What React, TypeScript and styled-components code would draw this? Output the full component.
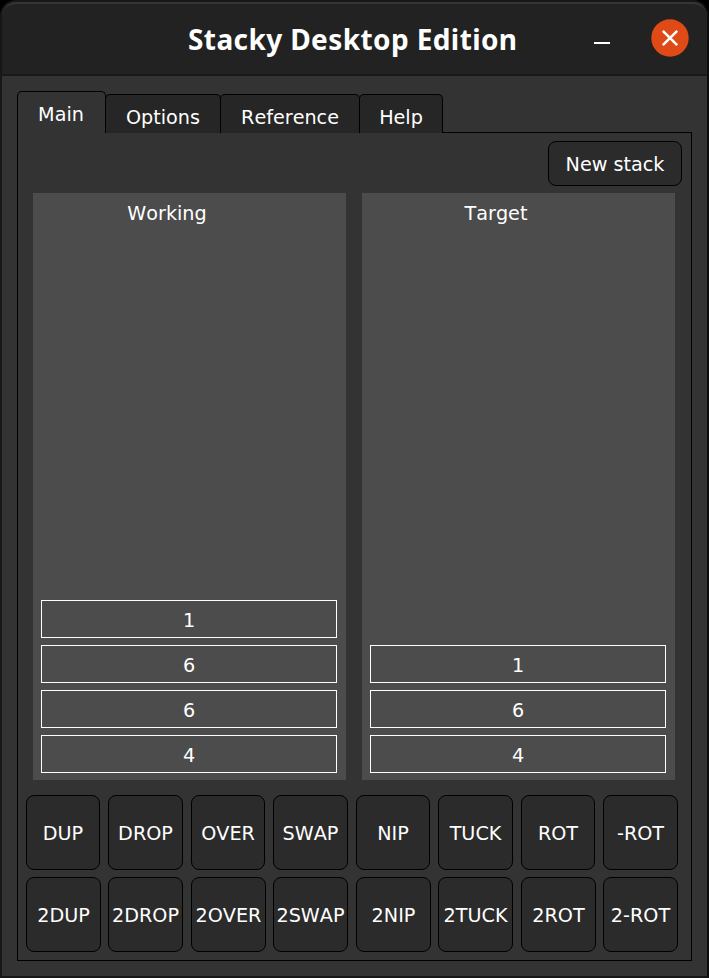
import React from "react";
import styled, { createGlobalStyle } from "styled-components";

const GlobalStyle = createGlobalStyle`
  *, *::before, *::after { box-sizing: border-box; }
  body { margin: 0; background: #000; }
  button { font: inherit; color: inherit; padding: 0; margin: 0; }
`;

const Window = styled.div`
  width: 709px;
  height: 978px;
  border: 2px solid #171717;
  border-right-color: #0c0c0c;
  border-radius: 16px 16px 0 0;
  background: #333333;
  color: #ffffff;
  font-family: "DejaVu Sans", sans-serif;
  font-size: 19.2px;
  font-kerning: none;
  overflow: hidden;
  display: flex;
  flex-direction: column;
`;

const TitleBar = styled.header`
  flex: none;
  height: 74px;
  display: grid;
  grid-template-columns: 1fr auto 1fr;
  align-items: center;
  background: #222222;
  border-top: 2px solid #353535;
  border-bottom: 2px solid #191919;
  border-radius: 14px 14px 0 0;
`;

const Title = styled.h1`
  grid-column: 2;
  width: 333px;
  margin: 0;
  padding-bottom: 1px;
  line-height: 38px;
  font-family: "Noto Sans", sans-serif;
  font-size: 28px;
  font-weight: 700;
  letter-spacing: 0.4px;
  white-space: nowrap;
`;

const WindowControls = styled.div`
  display: flex;
  justify-content: flex-end;
  align-items: center;
  gap: 41px;
  height: 38px;
  margin-bottom: 2px;
  padding-right: 18px;
`;

const ControlButton = styled.button`
  display: flex;
  border: 0;
  background: none;
`;

const Body = styled.main`
  flex: 1;
  display: flex;
  flex-direction: column;
  padding: 15px 15px 15px;
`;

const TabStrip = styled.nav`
  display: flex;
  align-items: flex-end;
  height: 42px;
`;

const Tab = styled.button<{ $active?: boolean; $width: number }>`
  position: relative;
  z-index: ${(p) => (p.$active ? 1 : 0)};
  flex: none;
  width: ${(p) => p.$width}px;
  height: ${(p) => (p.$active ? 42 : 39)}px;
  padding-top: ${(p) => (p.$active ? 3 : 7)}px;
  padding-right: ${(p) => (p.$active ? 1 : 0)}px;
  border: 1px solid #000;
  border-bottom: 0;
  border-radius: 5px 5px 0 0;
  background: ${(p) => (p.$active ? "#333333" : "#262626")};
  & + & { margin-left: -1px; }
`;

const TabFiller = styled.div`
  flex: 1;
  height: 1px;
  background: #000;
`;

const Pane = styled.section`
  flex: 1;
  border: 1px solid #000;
  border-top: 0;
  padding: 8px 9px 8px 8px;
  display: flex;
  flex-direction: column;
`;

const PushButton = styled.button`
  padding-top: 2px;
  border: 1px solid #000;
  border-radius: 8px;
  background: #2b2b2b;
  white-space: nowrap;
`;

const NewStackButton = styled(PushButton)`
  align-self: flex-end;
  width: 134px;
  height: 45px;
`;

const Stacks = styled.div`
  display: flex;
  gap: 16px;
  height: 587px;
  margin: 7px 7px 15px;
`;

const Stack = styled.div`
  display: flex;
  flex-direction: column;
  width: 313px;
  padding: 8px 9px 7px 8px;
  background: #4c4c4c;
`;

const StackTitle = styled.h2`
  width: 252px;
  margin: 0 0 auto;
  font-size: inherit;
  font-weight: 400;
  line-height: 26px;
  text-align: center;
`;

const Cell = styled.div`
  height: 38px;
  margin-top: 7px;
  border: 1px solid #fff;
  line-height: 40px;
  text-align: center;
`;

const Operations = styled.div`
  display: grid;
  grid-template-columns: 82px 83px 82px 83px 82px 83px 82px 75px;
  grid-template-rows: 75px 75px;
  row-gap: 7px;
`;

const OpButton = styled(PushButton)`
  width: 75px;
  display: flex;
  align-items: center;
  justify-content: center;
  &:nth-child(-n + 8):nth-child(odd) { width: 74px; }
`;

const tabs = [
  { label: "Main", width: 89, active: true },
  { label: "Options", width: 116 },
  { label: "Reference", width: 140 },
  { label: "Help", width: 84 },
];

const stacks = [
  { title: "Working", cells: [1, 6, 6, 4] },
  { title: "Target", cells: [1, 6, 4] },
];

const operations = [
  "DUP", "DROP", "OVER", "SWAP", "NIP", "TUCK", "ROT", "-ROT",
  "2DUP", "2DROP", "2OVER", "2SWAP", "2NIP", "2TUCK", "2ROT", "2-ROT",
];

export default function App() {
  return (
    <>
      <GlobalStyle />
      <Window>
        <TitleBar>
          <Title>Stacky Desktop Edition</Title>
          <WindowControls>
            <ControlButton aria-label="Minimize">
              <svg width="16" height="38" viewBox="0 0 16 38">
                <path d="M0 24h16" stroke="#fff" strokeWidth="2" />
              </svg>
            </ControlButton>
            <ControlButton aria-label="Close">
              <svg width="38" height="38" viewBox="0 0 38 38">
                <circle cx="19" cy="19" r="18.7" fill="#e04a17" />
                <path d="M11.8 11.8l14.4 14.4M26.2 11.8L11.8 26.2" stroke="#fff" strokeWidth="2.5" />
              </svg>
            </ControlButton>
          </WindowControls>
        </TitleBar>
        <Body>
          <TabStrip>
            {tabs.map((t) => (
              <Tab key={t.label} $active={t.active} $width={t.width}>{t.label}</Tab>
            ))}
            <TabFiller />
          </TabStrip>
          <Pane>
            <NewStackButton>New stack</NewStackButton>
            <Stacks>
              {stacks.map((s) => (
                <Stack key={s.title}>
                  <StackTitle>{s.title}</StackTitle>
                  {s.cells.map((value, i) => (
                    <Cell key={i}>{value}</Cell>
                  ))}
                </Stack>
              ))}
            </Stacks>
            <Operations>
              {operations.map((op) => (
                <OpButton key={op}>{op}</OpButton>
              ))}
            </Operations>
          </Pane>
        </Body>
      </Window>
    </>
  );
}
